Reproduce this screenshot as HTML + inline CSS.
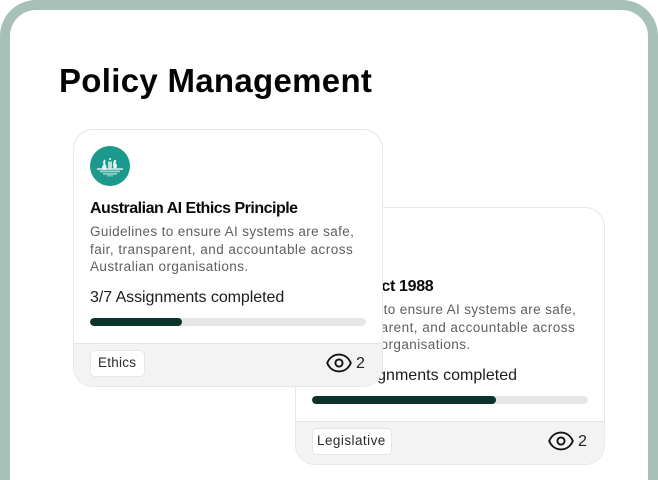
<!DOCTYPE html>
<html><head><meta charset="utf-8">
<style>
html,body{margin:0;padding:0;width:658px;height:480px;overflow:hidden;background:#fff;font-family:"Liberation Sans",sans-serif}
.page{position:relative;width:658px;height:480px;overflow:hidden;background:#fff}
.frame{position:absolute;left:0;top:0;width:638px;height:470px;border:10px solid #a7c1b9;border-bottom:0;border-radius:36px 36px 0 0}
h1{position:absolute;left:59px;top:62px;margin:0;font-size:33px;line-height:38px;font-weight:700;color:#050505;white-space:nowrap;letter-spacing:.3px}
.card{position:absolute;width:308px;height:256px;background:#fff;border:1px solid #e5e7e8;border-radius:20px;overflow:hidden}
.c1{left:73px;top:129px}
.c2{left:295px;top:207px}
.logo{position:absolute;left:16px;top:16px;width:40px;height:40px;border-radius:50%;background:#1a998c}
.t{position:absolute;left:16px;top:69px;font-size:16px;line-height:20px;font-weight:700;color:#0b0b0b;white-space:nowrap;letter-spacing:-.5px}
.c2 .t{letter-spacing:-.33px}
.d{position:absolute;left:16px;top:93.400px;font-size:13.5px;line-height:17.5px;color:#5c5f62;white-space:nowrap}
.d span{display:block}
.l1{letter-spacing:.37px}.l2{letter-spacing:.47px}.l3{letter-spacing:.43px}
.p{position:absolute;left:16px;top:158px;font-size:16px;line-height:20px;color:#1c1c1c;white-space:nowrap;letter-spacing:-.06px}
.c2 .p{letter-spacing:.02px}
.bar{position:absolute;left:16px;top:188px;width:276px;height:8px;border-radius:4px;background:#e6e6e6;overflow:hidden}
.bar i{display:block;height:8px;border-radius:4px;background:#0b332b}
.foot{position:absolute;left:0;top:213px;width:308px;height:43px;background:#f3f3f4;border-top:1px solid #e4e4e5}
.tag{position:absolute;left:16px;top:6px;height:27px;box-sizing:border-box;border:1px solid #e6e6e7;border-radius:5px;background:#fff;font-size:13.5px;line-height:24px;color:#2a2a2a;white-space:nowrap}
.eye{position:absolute;left:252px;top:9px}
.n{position:absolute;left:282px;top:10px;font-size:16px;line-height:20px;color:#222}
</style></head>
<body>
<div class="page">
<div class="frame"></div>
<h1>Policy Management</h1>

<div class="card c2">
  <div class="logo"></div>
  <div class="t">Privacy Act 1988</div>
  <div class="d"><span class="l1">Guidelines to ensure AI systems are safe,</span><span class="l2">fair, transparent, and accountable across</span><span class="l3">Australian organisations.</span></div>
  <div class="p">8/12 Assignments completed</div>
  <div class="bar"><i style="width:184px"></i></div>
  <div class="foot">
    <div class="tag" style="width:80px;padding-left:4px;letter-spacing:.45px">Legislative</div>
    <svg class="eye" width="26" height="20" viewBox="0 0 26 20" fill="none" stroke="#111" stroke-width="1.9" stroke-linejoin="round"><path d="M1.200 10C3.500 4.500 8 1.600 13 1.600S22.500 4.500 24.800 10C22.500 15.500 18 18.400 13 18.400S3.500 15.500 1.200 10Z"/><circle cx="13" cy="10" r="3.600"/></svg>
    <div class="n">2</div>
  </div>
</div>

<div class="card c1">
  <div class="logo">
    <svg width="40" height="40" viewBox="0 0 40 40" fill="#fff">
      <path d="M13 15.500l1.500-2 1 .5-.5 3 1.500 3.500-.5 3h-3l-1-2.500 1.500-2.500z" opacity=".9"/>
      <path d="M24 14l2 .2.5 1.300-1 .7 1.500 3-.5 3h-3l-.5-4z" opacity=".9"/>
      <rect x="18" y="15.500" width="4" height="7" opacity=".7"/>
      <rect x="19" y="12" width="2" height="2" opacity=".75"/>
      <rect x="7" y="22" width="26" height="2" opacity=".65"/>
      <rect x="10" y="24.500" width="20" height="1.800" opacity=".6"/>
      <rect x="13" y="27" width="14" height="1.800" opacity=".5"/>
      <rect x="17" y="29" width="6" height="1.500" opacity=".4"/>
    </svg>
  </div>
  <div class="t">Australian AI Ethics Principle</div>
  <div class="d"><span class="l1">Guidelines to ensure AI systems are safe,</span><span class="l2">fair, transparent, and accountable across</span><span class="l3">Australian organisations.</span></div>
  <div class="p">3/7 Assignments completed</div>
  <div class="bar"><i style="width:92px"></i></div>
  <div class="foot">
    <div class="tag" style="width:55px;padding-left:7px;letter-spacing:.25px">Ethics</div>
    <svg class="eye" width="26" height="20" viewBox="0 0 26 20" fill="none" stroke="#111" stroke-width="1.9" stroke-linejoin="round"><path d="M1.200 10C3.500 4.500 8 1.600 13 1.600S22.500 4.500 24.800 10C22.500 15.500 18 18.400 13 18.400S3.500 15.500 1.200 10Z"/><circle cx="13" cy="10" r="3.600"/></svg>
    <div class="n">2</div>
  </div>
</div>
</div>
</body></html>
